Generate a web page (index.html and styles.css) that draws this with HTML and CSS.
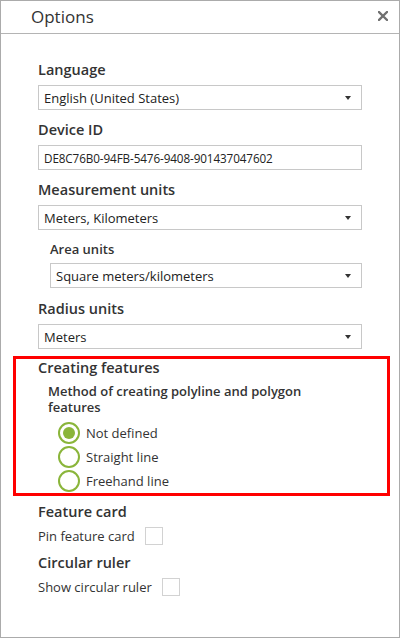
FILE: index.html
```html
<!DOCTYPE html>
<html>
<head>
<meta charset="utf-8">
<link rel="stylesheet" href="styles.css">
</head>
<body>
<div class="dialog">
  <div class="titlebar">
    <span class="title">Options</span>
    <svg class="close" width="10" height="10" viewBox="0 0 10 10"><path d="M1 1L9 9M9 1L1 9" stroke="#707070" stroke-width="2.3" stroke-linecap="square"/></svg>
  </div>
  <div class="content">
    <div class="label">Language</div>
    <div class="select"><span>English (United States)</span><span class="arrow"></span></div>

    <div class="label">Device ID</div>
    <div class="select input"><span>DE8C76B0-94FB-5476-9408-901437047602</span></div>

    <div class="label">Measurement units</div>
    <div class="select"><span>Meters, Kilometers</span><span class="arrow"></span></div>

    <div class="sub">
      <div class="label small">Area units</div>
      <div class="select"><span>Square meters/kilometers</span><span class="arrow"></span></div>
    </div>

    <div class="label">Radius units</div>
    <div class="select"><span>Meters</span><span class="arrow"></span></div>

    <div class="creating">
      <div class="label">Creating features</div>
      <div class="method">Method of creating polyline and polygon features</div>
      <div class="radios">
        <div class="radio checked"><span class="dot"></span>Not defined</div>
        <div class="radio"><span class="dot"></span>Straight line</div>
        <div class="radio"><span class="dot"></span>Freehand line</div>
      </div>
    </div>

    <div class="label">Feature card</div>
    <div class="check-row">Pin feature card<span class="box"></span></div>

    <div class="label">Circular ruler</div>
    <div class="check-row">Show circular ruler<span class="box"></span></div>
  </div>
</div>
</body>
</html>
```
FILE: styles.css
```css
*, *::before, *::after { box-sizing: border-box; }
html, body { margin: 0; padding: 0; background: #fff; }
body { font-family: "Open Sans", "Noto Sans", sans-serif; color: #333; }

.dialog {
  width: 400px;
  height: 638px;
  border: 1px solid #ababab;
  background: #fff;
}

.titlebar {
  height: 33px;
  border-bottom: 1px solid #b4b4b4;
  display: flex;
  align-items: center;
  justify-content: space-between;
  padding: 0 11px 1px 30px;
}
.title { font-size: 17px; color: #333; }
.close { display: block; margin-top: -1px; }

.content {
  width: 324px;
  margin-left: 37px;
  padding-top: 26px;
}

.label {
  font-size: 14.5px;
  font-weight: 600;
  line-height: 20px;
  color: #333;
  margin-bottom: 5px;
}
.label.small { font-size: 13px; margin-bottom: 4px; }

.select {
  height: 25px;
  border: 1px solid #c8c8c8;
  display: flex;
  align-items: center;
  justify-content: space-between;
  padding: 0 10px 0 5px;
  font-size: 13px;
  color: #222;
  margin-bottom: 10px;
}
.select.input { font-size: 11.7px; letter-spacing: -0.1px; }
.arrow {
  width: 0; height: 0;
  border-left: 3px solid transparent;
  border-right: 3px solid transparent;
  border-top: 4px solid #333;
}

.sub { margin-left: 12px; margin-top: -1px; }
.sub .select { margin-bottom: 11px; }

.creating { position: relative; margin-top: -1px; }
.creating::before {
  content: "";
  position: absolute;
  left: -25px;
  top: -2px;
  width: 377px;
  height: 140px;
  border: 3px solid #ff0000;
  pointer-events: none;
}
.creating .label { margin-bottom: 5px; }
.method {
  margin-left: 10px;
  width: 265px;
  font-size: 13px;
  font-weight: 600;
  line-height: 16px;
  color: #333;
}
.radios { margin-left: 20px; margin-top: 6px; }
.radio {
  display: flex;
  align-items: center;
  height: 24px;
  font-size: 13px;
  color: #333;
}
.dot {
  width: 22px; height: 22px;
  border: 2px solid #8ab53a;
  border-radius: 50%;
  margin-right: 6px;
  display: flex;
  align-items: center;
  justify-content: center;
}
.radio.checked .dot::after {
  content: "";
  width: 12px; height: 12px;
  border-radius: 50%;
  background: #8ab53a;
}

.creating + .label { margin-top: 9px; }
.check-row {
  display: flex;
  align-items: center;
  font-size: 13px;
  color: #333;
  height: 18px;
  margin-bottom: 8px;
}
.box {
  width: 18px; height: 18px;
  border: 1px solid #d2d2d2;
  margin-left: 10px;
}
```
